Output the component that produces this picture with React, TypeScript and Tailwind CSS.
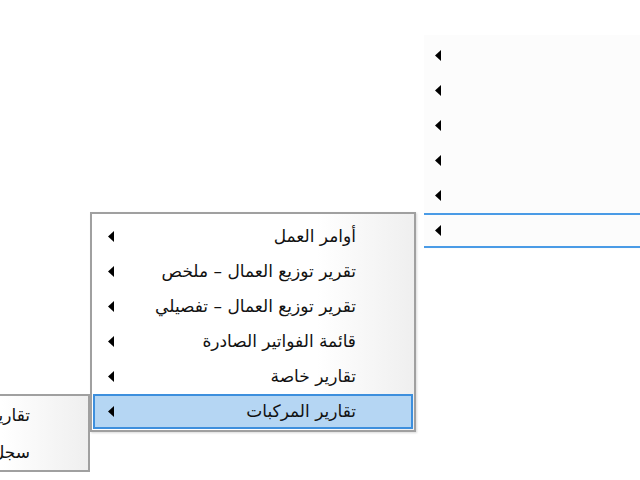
import React from 'react';

const font = { fontFamily: '"DejaVu Sans", "Noto Sans", sans-serif' };

function Arrow() {
  return (
    <svg width="6" height="11" viewBox="0 0 6 11" className="shrink-0">
      <path d="M6 0 L0 5.5 L6 11 Z" fill="#000" />
    </svg>
  );
}

type Item = { label: string; active?: boolean };

function MenuRow({ item }: { item: Item }) {
  return (
    <div
      className={`h-[35px] mx-[1px] flex items-center justify-between pl-[13px] pr-[55px] border-2 ${
        item.active ? 'bg-[#b5d6f3] border-[#3d8fdd]' : 'border-transparent'
      }`}
    >
      <Arrow />
      <span dir="rtl" className="text-[17px] leading-none text-[#111] whitespace-nowrap">
        {item.label}
      </span>
    </div>
  );
}

export default function App() {
  const items: Item[] = [
    { label: 'أوامر العمل' },
    { label: 'تقرير توزيع العمال – ملخص' },
    { label: 'تقرير توزيع العمال – تفصيلي' },
    { label: 'قائمة الفواتير الصادرة' },
    { label: 'تقارير خاصة' },
    { label: 'تقارير المركبات', active: true },
  ];

  const sub: Item[] = [{ label: 'تقارير الصيانة' }, { label: 'سجل المركبات' }];

  return (
    <div className="w-[640px] h-[480px] bg-white relative overflow-hidden" style={font}>
      {/* parent menu, top right */}
      <div className="absolute left-[424px] top-[35px] w-[240px] h-[214px] bg-[#fcfcfc] pt-[3px]">
        {[0, 1, 2, 3, 4].map((i) => (
          <div key={i} className="h-[35px] flex items-center pl-[11px]">
            <Arrow />
          </div>
        ))}
        <div className="h-[35px] flex items-center pl-[11px] border-y-2 border-[#4a9be6]">
          <Arrow />
        </div>
        <div className="absolute right-0 top-[125px] w-[2px] h-[4px] bg-[#e8953a]" />
      </div>

      {/* current submenu */}
      <div className="absolute left-[90px] top-[212px] w-[326px] h-[220px] border-2 border-[#a0a0a0] bg-gradient-to-r from-white from-70% to-[#efefef] pt-[5px] shadow-[1px_1px_2px_rgba(0,0,0,0.15)]">
        {items.map((it) => (
          <MenuRow key={it.label} item={it} />
        ))}
      </div>

      {/* next submenu, bottom left */}
      <div className="absolute left-[-130px] top-[394px] w-[220px] h-[78px] border-2 border-[#a0a0a0] bg-gradient-to-r from-white from-60% to-[#efefef] pt-[1px]">
        {sub.map((it) => (
          <div key={it.label} className="h-[37px] flex items-center justify-end pr-[58px]">
            <span dir="rtl" className="text-[17px] leading-none text-[#111] whitespace-nowrap">
              {it.label}
            </span>
          </div>
        ))}
      </div>
    </div>
  );
}
